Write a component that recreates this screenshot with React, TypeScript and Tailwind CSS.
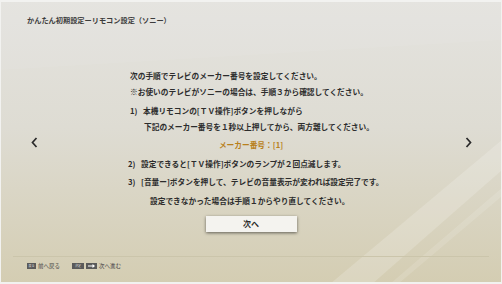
import React from "react";

const JP = "font-['Noto_Sans_CJK_JP','Noto_Sans',sans-serif]";

function Chevron({ dir }: { dir: "left" | "right" }) {
  return (
    <svg width="7" height="11" viewBox="0 0 7 11" className="block">
      <polyline
        points={dir === "left" ? "5.5,1 1.5,5.5 5.5,10" : "1.5,1 5.5,5.5 1.5,10"}
        fill="none"
        stroke="#2a2a2a"
        strokeWidth="1.7"
      />
    </svg>
  );
}

function Key({ children, w = "w-[10px]" }: { children: React.ReactNode; w?: string }) {
  return (
    <span className={`${w} h-[6px] bg-[#5a5a5a] text-[#d8d8d8] text-[3px] leading-[6px] flex items-center justify-center`}>
      {children}
    </span>
  );
}

export default function App() {
  return (
    <div
      className={`relative w-[502px] h-[284px] overflow-hidden flex flex-col text-[#2c2c2c] ${JP} bg-[linear-gradient(180deg,#e4e3df_0%,#dedcd3_45%,#d4cdb2_100%)]`}
    >
      {/* light streaks */}
      <svg className="pointer-events-none absolute inset-0" width="502" height="284" viewBox="0 0 502 284">
        <polygon points="330,284 372,284 502,170 502,140" fill="#ffffff" opacity="0.18" />
        <polygon points="390,284 398,284 502,196 502,188" fill="#ffffff" opacity="0.12" />
        <polygon points="0,0 502,0 502,40 0,70" fill="#ffffff" opacity="0.06" />
      </svg>

      {/* Header */}
      <div className="relative h-[40px] pl-[27px] pt-[16px] text-[7.2px] leading-[9px] font-bold text-[#3c3c3c]">
        かんたん初期設定ーリモコン設定（ソニー）
      </div>

      {/* Main */}
      <div className="relative flex h-[204px]">
        <div className="w-[68px] flex items-center justify-center">
          <Chevron dir="left" />
        </div>

        <div className="flex-1 flex flex-col pt-[28px] text-[7.7px] leading-[16px] font-bold">
          <div className="pl-[62px]">
            <p>次の手順でテレビのメーカー番号を設定してください。</p>
            <p>※お使いのテレビがソニーの場合は、手順３から確認してください。</p>
            <div className="mt-[3px] flex">
              <span className="w-[13px]">1)</span>
              <div>
                <p>本機リモコンの[ＴＶ操作]ボタンを押しながら</p>
                <p className="pl-[1px]">下記のメーカー番号を１秒以上押してから、両方離してください。</p>
              </div>
            </div>
          </div>
          <p className="mt-[2px] text-center text-[#b8801c]">メーカー番号：[1]</p>
          <div className="pl-[60px]">
            <div className="mt-[3px] flex">
              <span className="w-[13px]">2)</span>
              <p>設定できると[ＴＶ操作]ボタンのランプが２回点滅します。</p>
            </div>
            <div className="mt-[2px] flex">
              <span className="w-[13px]">3)</span>
              <p>[音量ー]ボタンを押して、テレビの音量表示が変われば設定完了です。</p>
            </div>
            <p className="mt-[3px] pl-[22px]">設定できなかった場合は手順１からやり直してください。</p>
          </div>
          <div className="mt-[7px] flex justify-center">
            <button className="w-[91px] h-[16px] bg-[#f4f3ef] shadow-[0_1px_3px_rgba(0,0,0,0.55)] text-[8px] leading-[16px] font-bold text-[#2a2a2a]">
              次へ
            </button>
          </div>
        </div>

        <div className="w-[68px] flex items-center justify-center">
          <Chevron dir="right" />
        </div>
      </div>

      {/* Footer */}
      <div className="relative mx-[13px] mt-[12px] border-t border-[#cbc5ab] pt-[6px] pl-[14px] flex items-center gap-[2px] text-[5.5px] leading-[6px] text-[#444]">
        <Key w="w-[9px]">戻る</Key>
        <span className="mr-[10px]">前へ戻る</span>
        <Key w="w-[12px]">決定</Key>
        <Key w="w-[11px]">
          <svg width="7" height="4" viewBox="0 0 7 4" className="block">
            <path d="M0 1.4H4.5V0L7 2 4.5 4V2.6H0Z" fill="#ffffff" />
          </svg>
        </Key>
        <span>次へ進む</span>
      </div>

      {/* frame */}
      <div className="pointer-events-none absolute inset-0 shadow-[inset_0_2px_0_#f2f2f0,inset_0_-2px_0_#f2f2f0,inset_1px_0_0_#f2f2f0,inset_-1px_0_0_#f2f2f0]" />
    </div>
  );
}
